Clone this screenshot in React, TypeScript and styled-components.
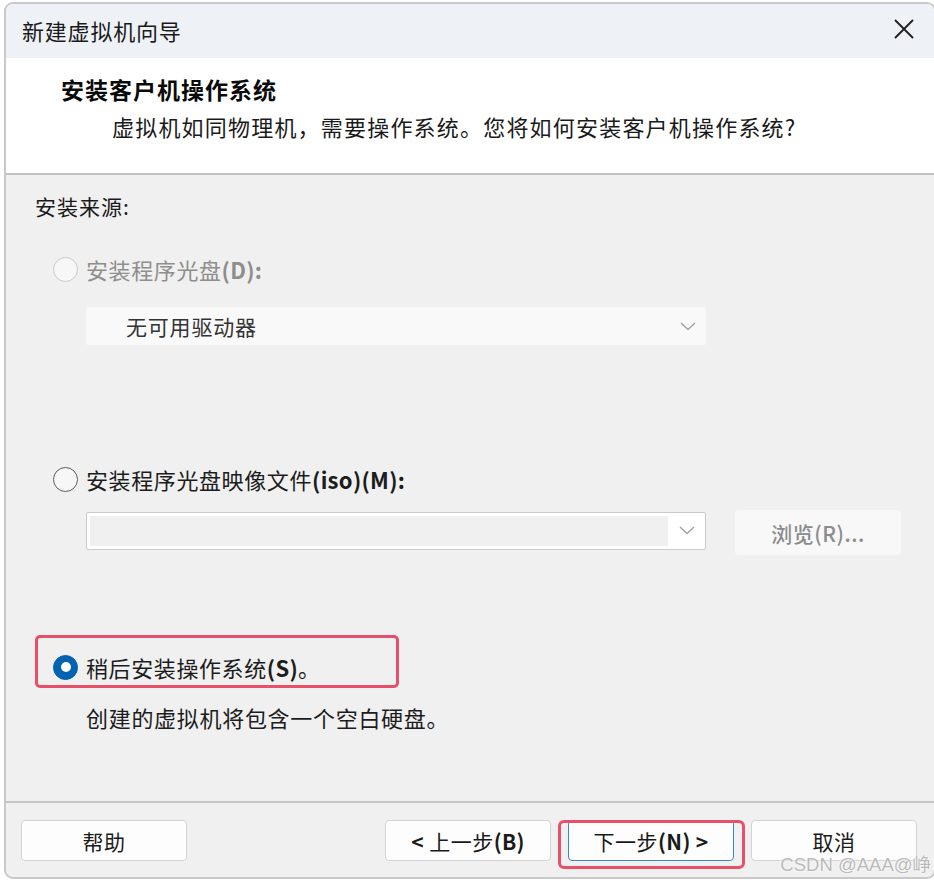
import styled, { createGlobalStyle } from "styled-components";

const GlobalStyle = createGlobalStyle`
  html, body {
    margin: 0;
    padding: 0;
    background: #ffffff;
    overflow: hidden;
  }
  body {
    font-family: "Noto Sans CJK SC", "Noto Sans", sans-serif;
  }
`;

const ChevronDown = () => (
  <svg width="16" height="9" viewBox="0 0 16 9" fill="none">
    <path d="M1 1 L8 7.5 L15 1" stroke="#a0a0a0" strokeWidth="1.3" />
  </svg>
);

const CloseIcon = () => (
  <svg width="22" height="22" viewBox="0 0 22 22" fill="none">
    <path d="M2 2 L20 20 M20 2 L2 20" stroke="#1f1f1f" strokeWidth="1.8" />
  </svg>
);

const App = () => {
  return (
    <>
      <GlobalStyle />
      <Window>
        <TitleBar>
          <Title>新建虚拟机向导</Title>
          <CloseBtn>
            <CloseIcon />
          </CloseBtn>
        </TitleBar>

        <Header>
          <Heading>安装客户机操作系统</Heading>
          <SubHeading>
            虚拟机如同物理机，需要操作系统。您将如何安装客户机操作系统?
          </SubHeading>
        </Header>

        <Body>
          <SectionLabel>安装来源:</SectionLabel>

          <RadioRow $top={31}>
            <Radio $state="disabled" />
            <RadioText $disabled>
              安装程序光盘<Latin>(D):</Latin>
            </RadioText>
          </RadioRow>
          <Select $variant="flat" $top={22}>
            <SelectText>无可用驱动器</SelectText>
            <ChevronDown />
          </Select>

          <RadioRow $top={118}>
            <Radio $state="off" />
            <RadioText>
              安装程序光盘映像文件<Latin>(iso)(M):</Latin>
            </RadioText>
          </RadioRow>
          <PathRow>
            <Select $variant="edit" $top={0}>
              <EditArea />
              <ChevronDown />
            </Select>
            <BrowseBtn>浏览(R)...</BrowseBtn>
          </PathRow>

          <Highlight>
            <RadioRow $top={0}>
              <Radio $state="on" />
              <RadioText>
                稍后安装操作系统<Latin>(S)</Latin>。
              </RadioText>
            </RadioRow>
          </Highlight>
          <Note>创建的虚拟机将包含一个空白硬盘。</Note>
        </Body>

        <Footer>
          <Button>帮助</Button>
          <Spacer />
          <Button>
            <Latin>&lt;</Latin>&nbsp;上一步<Latin>(B)</Latin>
          </Button>
          <Marked>
            <Button $primary>
              下一步<Latin>(N) &gt;</Latin>
            </Button>
          </Marked>
          <Button>取消</Button>
        </Footer>

        <Watermark>CSDN @AAA@峥</Watermark>
      </Window>
    </>
  );
};
export default App;

const Window = styled.div`
  position: relative;
  box-sizing: border-box;
  margin: 2px 0 0 4px;
  width: 932px;
  height: 877px;
  border: 2px solid #c9c9c9;
  border-radius: 9px;
  overflow: hidden;
  display: flex;
  flex-direction: column;
  background: #f0f0f0;
`;

const TitleBar = styled.div`
  height: 54px;
  flex-shrink: 0;
  display: flex;
  align-items: center;
  justify-content: space-between;
  padding: 0 19px 0 16px;
  background: #eef2f7;
`;

const Title = styled.div`
  font-size: 22px;
  color: #1a1a1a;
  letter-spacing: 0.8px;
  line-height: 1;
  margin-top: -2px;
`;

const CloseBtn = styled.div`
  display: flex;
  margin-top: -4px;
`;

const Header = styled.div`
  height: 117px;
  flex-shrink: 0;
  box-sizing: border-box;
  background: #ffffff;
  border-bottom: 2px solid #c2c2c2;
  padding: 15px 0 0 55px;
`;

const Heading = styled.div`
  font-size: 23px;
  font-weight: 700;
  color: #0a0a0a;
  line-height: 32px;
  letter-spacing: 1px;
`;

const SubHeading = styled.div`
  margin: 5px 0 0 51px;
  font-size: 22px;
  color: #1a1a1a;
  line-height: 32px;
  letter-spacing: 1.2px;
`;

const Body = styled.div`
  flex: 1;
  display: flex;
  flex-direction: column;
  padding: 15px 0 0 29px;
  border-bottom: 2px solid #c6c6c6;
`;

const SectionLabel = styled.div`
  font-size: 21px;
  color: #1a1a1a;
  line-height: 32px;
  letter-spacing: 1px;
`;

const Latin = styled.span`
  font-weight: 600;
  letter-spacing: 0.3px;
`;

const RadioRow = styled.div<{ $top: number }>`
  display: flex;
  align-items: center;
  gap: 8px;
  height: 32px;
  margin-top: ${(p) => p.$top}px;
  padding-left: 18px;
`;

const Radio = styled.span<{ $state: "disabled" | "off" | "on" }>`
  box-sizing: border-box;
  width: 25px;
  height: 25px;
  border-radius: 50%;
  flex-shrink: 0;
  border: 1.5px solid
    ${(p) =>
      p.$state === "disabled"
        ? "#c9c9c9"
        : p.$state === "off"
        ? "#5c5c5c"
        : "#0063b1"};
  background: ${(p) => (p.$state === "on" ? "#0063b1" : "#f7f7f7")};
  display: flex;
  align-items: center;
  justify-content: center;
  &::after {
    content: "";
    display: ${(p) => (p.$state === "on" ? "block" : "none")};
    width: 10px;
    height: 10px;
    border-radius: 50%;
    background: #ffffff;
  }
`;

const RadioText = styled.span<{ $disabled?: boolean }>`
  font-size: 22px;
  line-height: 32px;
  color: ${(p) => (p.$disabled ? "#8e8e8e" : "#1c1c1c")};
  letter-spacing: 0.6px;
`;

const Select = styled.div<{ $variant: "flat" | "edit"; $top: number }>`
  box-sizing: border-box;
  width: 620px;
  height: 38px;
  margin: ${(p) => p.$top}px 0 0 ${(p) => (p.$variant === "flat" ? "51px" : "0")};
  display: flex;
  align-items: center;
  justify-content: space-between;
  padding: ${(p) => (p.$variant === "flat" ? "0 10px 0 40px" : "3px 10px 3px 3px")};
  background: ${(p) => (p.$variant === "flat" ? "#f9f9f9" : "#ffffff")};
  border: ${(p) => (p.$variant === "flat" ? "none" : "1.5px solid #cbcbcb")};
  border-radius: 2px;
`;

const SelectText = styled.span`
  font-size: 21px;
  color: #333333;
  letter-spacing: 0.8px;
`;

const EditArea = styled.div`
  width: 578px;
  height: 100%;
  background: #f0f0f0;
`;

const PathRow = styled.div`
  display: flex;
  align-items: center;
  gap: 29px;
  margin: 11px 0 0 51px;
`;

const BrowseBtn = styled.div`
  box-sizing: border-box;
  width: 166px;
  height: 45px;
  margin-top: 4px;
  display: flex;
  align-items: center;
  justify-content: center;
  background: #f8f8f8;
  border-radius: 4px;
  font-size: 21px;
  font-weight: 500;
  color: #8c8c8c;
  letter-spacing: 0.5px;
`;

const Highlight = styled.div`
  box-sizing: border-box;
  width: 364px;
  height: 53px;
  margin: 80px 0 0 0;
  padding-top: 13px;
  border: 3px solid #e8506a;
  border-radius: 5px;
  ${RadioRow} {
    padding-left: 15px;
  }
`;

const Note = styled.div`
  margin: 13px 0 0 51px;
  font-size: 22px;
  line-height: 32px;
  color: #1c1c1c;
  letter-spacing: 0.7px;
`;

const Footer = styled.div`
  height: 74px;
  flex-shrink: 0;
  box-sizing: border-box;
  display: flex;
  align-items: flex-start;
  gap: 17px;
  padding: 17px 17px 0 15px;
`;

const Spacer = styled.div`
  flex: 1;
`;

const Button = styled.div<{ $primary?: boolean }>`
  box-sizing: border-box;
  width: 166px;
  height: 41px;
  display: flex;
  align-items: center;
  justify-content: center;
  background: #fdfdfd;
  border: ${(p) => (p.$primary ? "1.5px solid #3a86d6" : "1px solid #d3d3d3")};
  border-radius: 4px;
  font-size: 21px;
  color: #1a1a1a;
  letter-spacing: 0.5px;
`;

const Marked = styled.div`
  position: relative;
  &::after {
    content: "";
    position: absolute;
    left: -10px;
    right: -11px;
    top: 0;
    bottom: -8px;
    border: 3px solid #e8506a;
    border-radius: 6px;
    pointer-events: none;
  }
`;

const Watermark = styled.div`
  position: absolute;
  right: 3px;
  bottom: 1px;
  font-family: "Liberation Sans", "Noto Sans CJK SC", sans-serif;
  font-size: 18.5px;
  color: #b4b4b4;
  text-shadow: 0 0 2px #ffffff, 0 0 2px #ffffff;
  opacity: 0.9;
`;
